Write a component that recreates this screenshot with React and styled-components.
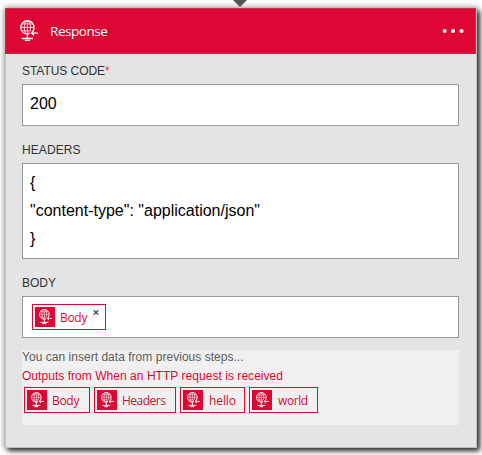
import React from "react";
import styled, { createGlobalStyle } from "styled-components";

const RED = "#de0733";

const GlobalStyle = createGlobalStyle`
  *, *::before, *::after { box-sizing: border-box; }
  body {
    margin: 0;
    background: #fff;
    overflow: hidden;
    font-family: "Liberation Sans", Arial, sans-serif;
  }
`;

const Canvas = styled.div`
  width: 482px;
  height: 455px;
  padding: 0 5px;
  overflow: hidden;
`;

const Connector = styled.svg`
  display: block;
  width: 14px;
  height: 8px;
  margin-left: 228px;
`;

const Card = styled.section`
  width: 472px;
  height: 440px;
  background: #e4e4e4;
  border: 1px solid #c3c3c3;
  border-top: 0;
  box-shadow: 3px 3px 5px rgba(0, 0, 0, 0.75), 0 0 6px 1px rgba(0, 0, 0, 0.35);
`;

const Header = styled.header`
  display: flex;
  align-items: center;
  width: 471px;
  height: 46px;
  margin-left: -1px;
  padding: 0 11px 0 14px;
  background: ${RED};
  border: 1px solid #b9324f;
  color: #fff;
`;

const Title = styled.h1`
  flex: 1;
  margin: 0 0 0 12px;
  font: 400 13.5px/20px "Open Sans", "Noto Sans", sans-serif;
  letter-spacing: -0.45px;
`;

const Dots = styled.svg`
  display: block;
  width: 22px;
  height: 5px;
`;

const Content = styled.div`
  display: flex;
  flex-direction: column;
  padding: 9px 17px 0 16px;
`;

const Label = styled.label`
  height: 16px;
  margin-bottom: 5px;
  color: #333;
  font-size: 12px;
  line-height: 16px;
  letter-spacing: ${(p) => p.$spacing || "0"};
`;

const Required = styled.span`
  color: #f02c3c;
`;

const Field = styled.div`
  height: ${(p) => p.$height}px;
  margin-bottom: ${(p) => p.$gap}px;
  padding: ${(p) => p.$pad || "5px 7px"};
  background: #fff;
  border: 1px solid #999;
  color: #000;
  font-size: 16px;
  line-height: 28px;
  white-space: pre;
`;

const Suggestions = styled.div`
  height: 75px;
  background: #f0f0f0;
  font-size: 12px;
`;

const Hint = styled.p`
  margin: 0;
  height: 16px;
  line-height: 15px;
  color: #5c5c5c;
  letter-spacing: 0.03px;
`;

const Source = styled.p`
  margin: 0;
  height: 21px;
  line-height: 21px;
  color: ${RED};
  letter-spacing: 0.04px;
`;

const TokenList = styled.div`
  display: flex;
  gap: 4px;
  padding-left: 2px;
`;

const Token = styled.span`
  display: inline-flex;
  align-items: center;
  width: ${(p) => p.$width}px;
  height: 26px;
  padding: 2px;
  background: ${(p) => (p.$filled ? "#fff" : "transparent")};
  border: 1px solid ${RED};
  color: ${RED};
  font: 400 12px/20px "Open Sans", "Noto Sans", sans-serif;
`;

const TokenIcon = styled.span`
  display: flex;
  flex: none;
  align-items: center;
  justify-content: center;
  width: 20px;
  height: 20px;
  margin-right: 5px;
  background: ${RED};
  color: #fff;
`;

const TokenText = styled.span`
  padding-top: 2px;
  padding-left: ${(p) => p.$inset || 0}px;
  letter-spacing: ${(p) => p.$spacing || "0"};
`;

const Remove = styled.svg`
  flex: none;
  align-self: flex-start;
  width: 6px;
  height: 5px;
  margin: 3px 0 0 6px;
`;

function GlobeIcon({ size }) {
  return (
    <svg width={size} height={size * 1.2} viewBox="0 0 17 20.4" fill="none" stroke="currentColor">
      <circle cx="7" cy="7" r="6.3" strokeWidth="1.2" />
      <ellipse cx="7" cy="7" rx="3" ry="6.3" strokeWidth="0.8" />
      <path d="M7 .7v12.6M.7 7h12.6M2 3.7h10M2 10.3h7" strokeWidth="0.75" />
      <path d="M9.2 12.3h7" stroke={RED} strokeWidth="2.8" />
      <path d="M11 12.3h6M13.2 9.9l-2.5 2.4 2.5 2.4" strokeWidth="1.2" />
      <path d="M7 13.3v4M1.8 17.5h10.4M4.5 19.2h5" strokeWidth="1.3" />
    </svg>
  );
}

function DataToken({ text, width, spacing, inset, removable }) {
  return (
    <Token $width={width} $filled={removable}>
      <TokenIcon><GlobeIcon size={13} /></TokenIcon>
      <TokenText $spacing={spacing} $inset={inset}>{text}</TokenText>
      {removable && (
        <Remove viewBox="0 0 6 5" stroke="#333" strokeWidth="1.1">
          <path d="M.7.3l4.6 4.4M5.3.3L.7 4.7" />
        </Remove>
      )}
    </Token>
  );
}

export default function App() {
  return (
    <>
      <GlobalStyle />
      <Canvas>
        <Connector viewBox="0 0 14 8"><path d="M0 0h14L7 7z" fill="#555" /></Connector>
        <Card>
          <Header>
            <GlobeIcon size={18} />
            <Title>Response</Title>
            <Dots viewBox="0 0 22 5" fill="#fff">
              <circle cx="2.7" cy="2" r="2" />
              <circle cx="11" cy="2" r="2" />
              <circle cx="19.5" cy="2" r="2" />
            </Dots>
          </Header>
          <Content>
            <Label $spacing="-0.05px">STATUS CODE<Required>*</Required></Label>
            <Field $height={42} $gap={16}>200</Field>
            <Label $spacing="0.08px">HEADERS</Label>
            <Field $height={96} $gap={16}>{'{\n"content-type": "application/json"\n}'}</Field>
            <Label>BODY</Label>
            <Field $height={42} $gap={12} $pad="7px 9px">
              <DataToken text="Body" width={74} spacing="-0.3px" removable />
            </Field>
            <Suggestions>
              <Hint>You can insert data from previous steps...</Hint>
              <Source>Outputs from When an HTTP request is received</Source>
              <TokenList>
                <DataToken text="Body" width={66} spacing="-0.3px" />
                <DataToken text="Headers" width={82} spacing="-0.5px" />
                <DataToken text="hello" width={65} spacing="-0.1px" inset={1} />
                <DataToken text="world" width={69} spacing="-0.4px" inset={1} />
              </TokenList>
            </Suggestions>
          </Content>
        </Card>
      </Canvas>
    </>
  );
}
